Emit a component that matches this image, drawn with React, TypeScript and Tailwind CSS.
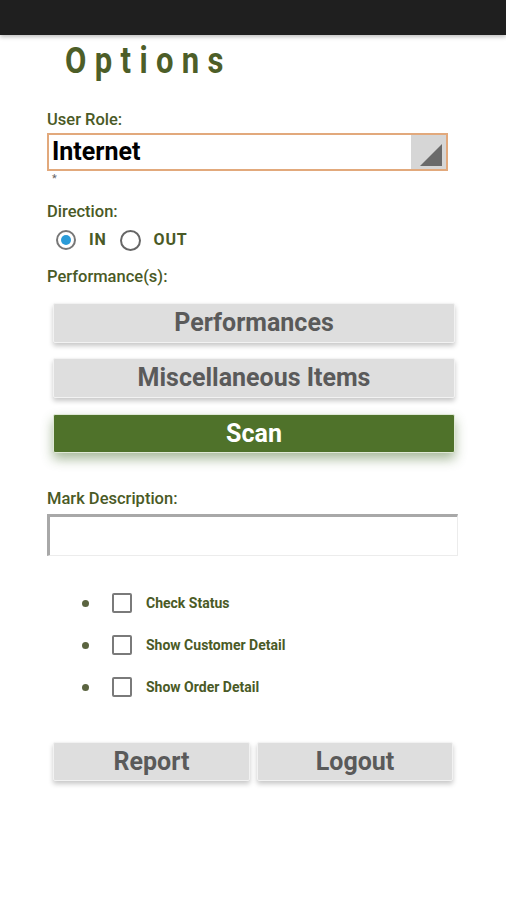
import React from "react";

const olive = "text-[#4a5a26]";

function GrayBtn({ label, className = "" }: { label: string; className?: string }) {
  return (
    <div
      className={`flex items-center justify-center bg-[#dedede] border border-[#f2f2f2] rounded-[2px] shadow-[0_3px_5px_rgba(0,0,0,0.22)] text-[25px] font-bold text-[#5a5a5a] ${className}`}
    >
      {label}
    </div>
  );
}

function CheckRow({ label }: { label: string }) {
  return (
    <div className="flex items-center h-[20px]">
      <div className="w-[7px] h-[7px] rounded-full bg-[#5b6440] ml-[82px]" />
      <div className="w-[20px] h-[20px] border-2 border-[#7a7a7a] rounded-[2px] ml-[23px] bg-white" />
      <span className={`ml-[14px] text-[14px] font-bold ${olive}`}>{label}</span>
    </div>
  );
}

export default function App() {
  return (
    <div
      className="w-[506px] h-[900px] bg-white relative overflow-hidden"
      style={{ fontFamily: "Roboto, 'Noto Sans', sans-serif" }}
    >
      <div className="h-[35px] bg-[#1f1f1f] shadow-[0_2px_4px_rgba(0,0,0,0.25)]" />
      <div className="pl-[65px] pt-[4px] h-[44px]">
        <div className="inline-block origin-center scale-y-[1.18] text-[31px] font-bold tracking-[0.27em] text-[#4d5e28] leading-[44px]">
          Options
        </div>
      </div>

      <div className="pl-[47px]">
        <div className={`mt-[32px] text-[16.5px] font-medium leading-[18px] ${olive}`}>User Role:</div>
        <div className="mt-[4px] w-[401px] h-[38px] border-2 border-[#e2a97c] flex items-stretch">
          <div className="flex-1 flex items-center pl-[3px] text-[25px] font-bold text-black">Internet</div>
          <div className="w-[35px] bg-[#d6d6d6] relative">
            <svg className="absolute right-[4px] bottom-[3px]" width="22" height="22" viewBox="0 0 22 22">
              <polygon points="0,22 22,0 22,22" fill="#6a6a6a" />
            </svg>
          </div>
        </div>
        <div className="pl-[5px] text-[11px] leading-[16px] text-[#666]">*</div>

        <div className={`mt-[16px] text-[16.5px] font-medium leading-[18px] ${olive}`}>Direction:</div>
        <div className="mt-[8px] flex items-center h-[22px]">
          <div className="ml-[9px] w-[20px] h-[20px] rounded-full border-2 border-[#777] flex items-center justify-center">
            <div className="w-[10px] h-[10px] rounded-full bg-[#2a9bd8]" />
          </div>
          <span className={`ml-[13px] text-[16px] font-bold tracking-[0.05em] ${olive}`}>IN</span>
          <div className="ml-[13px] w-[21px] h-[21px] rounded-full border-2 border-[#666]" />
          <span className={`ml-[13px] text-[16px] font-bold tracking-[0.05em] ${olive}`}>OUT</span>
        </div>

        <div className={`mt-[17px] text-[16.5px] font-medium leading-[18px] ${olive}`}>Performance(s):</div>
      </div>

      <div className="pl-[53px] w-[455px] mt-[17px] flex flex-col">
        <GrayBtn label="Performances" className="w-[402px] h-[40px]" />
        <GrayBtn label="Miscellaneous Items" className="w-[402px] h-[40px] mt-[15px]" />
        <div className="mt-[16px] w-[402px] h-[39px] flex items-center justify-center bg-[#4f722a] border border-[#dfe8d5] rounded-[2px] shadow-[0_6px_12px_rgba(60,100,30,0.45)] text-[25px] font-bold text-white">
          Scan
        </div>
      </div>

      <div className="pl-[47px]">
        <div className={`mt-[37px] text-[16.5px] font-medium leading-[18px] ${olive}`}>Mark Description:</div>
        <div className="mt-[6px] w-[411px] h-[42px] border-t-[3px] border-l-[3px] border-r border-b border-t-[#a8a8a8] border-l-[#a8a8a8] border-r-[#ececec] border-b-[#ececec] bg-white" />
      </div>

      <div className="mt-[37px] flex flex-col gap-[22px]">
        <CheckRow label="Check Status" />
        <CheckRow label="Show Customer Detail" />
        <CheckRow label="Show Order Detail" />
      </div>

      <div className="pl-[53px] mt-[45px] flex gap-[7px]">
        <GrayBtn label="Report" className="w-[197px] h-[39px]" />
        <GrayBtn label="Logout" className="w-[196px] h-[39px]" />
      </div>
    </div>
  );
}
